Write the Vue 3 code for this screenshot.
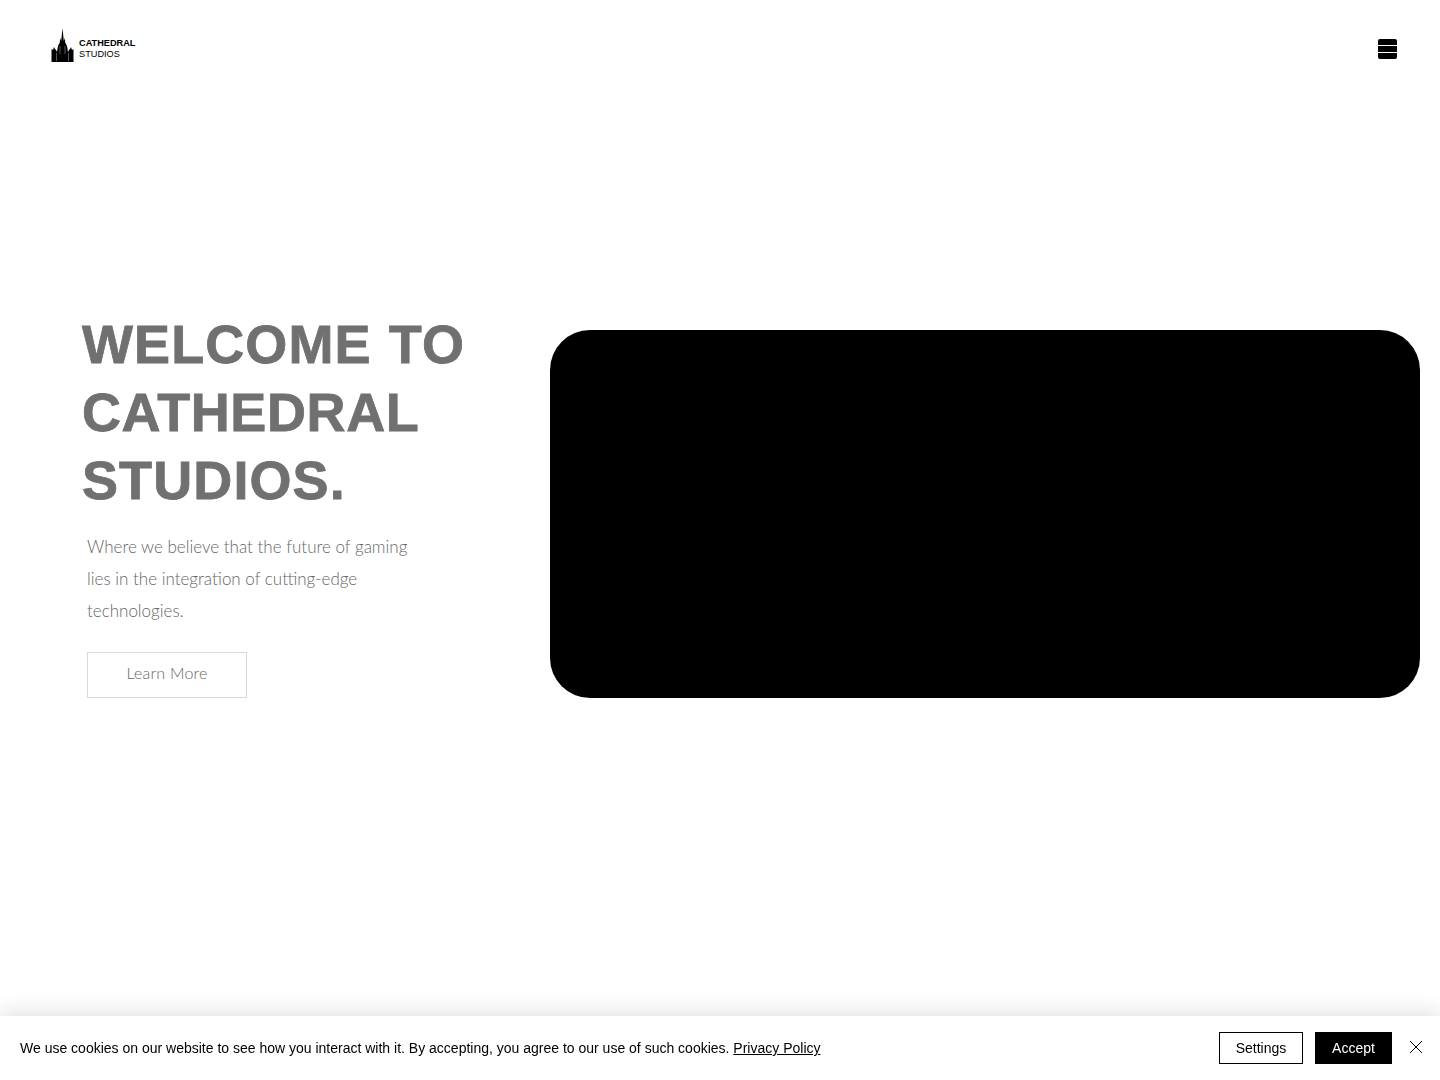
<template>
  <div class="page">
    <!-- Header -->
    <header class="header">
      <a class="logo" href="#">
        <svg class="logo-mark" width="23" height="34" viewBox="0 0 23 34" aria-hidden="true">
          <path d="M11.5 0 L12.3 8 L12.8 13 L13.6 10 L14.4 15 L15.6 17 L16.4 20 L17 24 L18 22 L19 21 L20 19 L21 22 L22.5 21 L22.5 34 L0.5 34 L0.5 21 L2 22 L3 19 L4 21 L5 22 L6 24 L6.6 20 L7.4 17 L8.6 15 L9.4 10 L10.2 13 L10.7 8 Z" fill="#000" />
          <path d="M5.5 25 V33 M17.5 25 V33 M9 18 V26 M14 18 V26" stroke="#fff" stroke-width="0.6" opacity="0.6" fill="none" />
        </svg>
        <span class="logo-text">
          <span class="logo-top">CATHEDRAL</span>
          <span class="logo-bottom">STUDIOS</span>
        </span>
      </a>
      <button class="burger" aria-label="Menu">
        <span></span><span></span><span></span>
      </button>
    </header>

    <!-- Hero -->
    <main class="hero">
      <section class="intro">
        <h1 class="title">WELCOME TO <span class="title-tight">CATHEDRAL</span> STUDIOS.</h1>
        <p class="lead">Where we believe that the future of gaming lies in the integration of cutting-edge technologies.</p>
        <a class="more" href="#">Learn More</a>
      </section>
      <div class="video"></div>
    </main>

    <!-- Cookie banner -->
    <div class="cookies">
      <p class="cookies-text">
        We use cookies on our website to see how you interact with it. By accepting, you agree to our use of such cookies.
        <a href="#">Privacy Policy</a>
      </p>
      <div class="cookies-actions">
        <button class="btn btn-outline">Settings</button>
        <button class="btn btn-dark">Accept</button>
        <button class="close" aria-label="Close">
          <svg width="14" height="14" viewBox="0 0 14 14" aria-hidden="true">
            <path d="M1 1 L13 13 M13 1 L1 13" stroke="#000" stroke-width="1" fill="none" />
          </svg>
        </button>
      </div>
    </div>
  </div>
</template>

<script setup>
</script>

<style>
html, body {
  margin: 0;
  background: #fff;
}
</style>

<style scoped>
.page {
  position: relative;
  height: 1080px;
  overflow: hidden;
  background: #fff;
}

/* Header */
.header {
  display: flex;
  justify-content: space-between;
  align-items: flex-start;
  height: 330px;
  padding: 28px 43px 0 51px;
  box-sizing: border-box;
}

.logo {
  display: flex;
  align-items: flex-end;
  gap: 5px;
  color: #000;
  text-decoration: none;
}

.logo-mark {
  display: block;
  filter: blur(0.3px);
}

.logo-text {
  display: flex;
  flex-direction: column;
  font-family: "Liberation Sans", Arial, sans-serif;
  font-size: 9.2px;
  line-height: 11px;
  padding-bottom: 2px;
}

.logo-top {
  font-weight: 700;
}

.burger {
  display: flex;
  flex-direction: column;
  gap: 1px;
  width: 19px;
  margin-top: 11px;
  padding: 0;
  border: 0;
  background: none;
}

.burger span {
  display: block;
  height: 6px;
  background: #000;
}

.burger span:first-child {
  border-radius: 2px 2px 0 0;
}

.burger span:last-child {
  border-radius: 0 0 2px 2px;
}

/* Hero */
.hero {
  display: flex;
  align-items: flex-start;
  gap: 21px;
  padding-right: 20px;
}

.intro {
  width: 529px;
  flex: none;
  margin-top: -20px;
  padding-left: 87px;
  box-sizing: border-box;
}

.title {
  margin: 0 0 17px -5px;
  color: #707070;
  -webkit-text-stroke: 0.8px #707070;
  font-family: "Liberation Sans", Arial, sans-serif;
  font-size: 54px;
  font-weight: 700;
  line-height: 68px;
  letter-spacing: 1.1px;
  word-spacing: 1px;
}

.title-tight {
  letter-spacing: 0.6px;
}

.lead {
  width: 340px;
  margin: 0 0 25px;
  color: #666;
  font-family: Lato, sans-serif;
  font-size: 17px;
  font-weight: 300;
  line-height: 32px;
}

.more {
  display: flex;
  align-items: center;
  justify-content: center;
  width: 160px;
  height: 46px;
  padding-bottom: 5px;
  box-sizing: border-box;
  border: 1px solid #d9d9d9;
  color: #666;
  font-family: Lato, sans-serif;
  font-size: 16px;
  font-weight: 300;
  letter-spacing: 0.2px;
  text-decoration: none;
}

.video {
  flex: 1;
  height: 368px;
  border-radius: 40px;
  background: #000;
  filter: blur(0.5px);
}

/* Cookie banner */
.cookies {
  position: fixed;
  left: 0;
  right: 0;
  bottom: 0;
  display: flex;
  align-items: center;
  justify-content: space-between;
  height: 64px;
  padding: 0 17px 0 20px;
  box-sizing: border-box;
  background: #fff;
  box-shadow: 0 -4px 20px rgba(0, 0, 0, 0.12);
  font-family: "Liberation Sans", Arial, sans-serif;
  font-size: 14px;
  color: #000;
}

.cookies-text {
  margin: 0;
}

.cookies-text a {
  color: #000;
}

.cookies-actions {
  display: flex;
  align-items: center;
  gap: 12px;
}

.btn {
  height: 32px;
  padding: 0;
  box-sizing: border-box;
  border: 1px solid #000;
  font: inherit;
}

.btn-outline {
  width: 84px;
  background: #fff;
  color: #000;
}

.btn-dark {
  width: 77px;
  background: #000;
  color: #fff;
}

.close {
  display: flex;
  margin: 0 0 2px 5px;
  padding: 0;
  border: 0;
  background: none;
}
</style>
